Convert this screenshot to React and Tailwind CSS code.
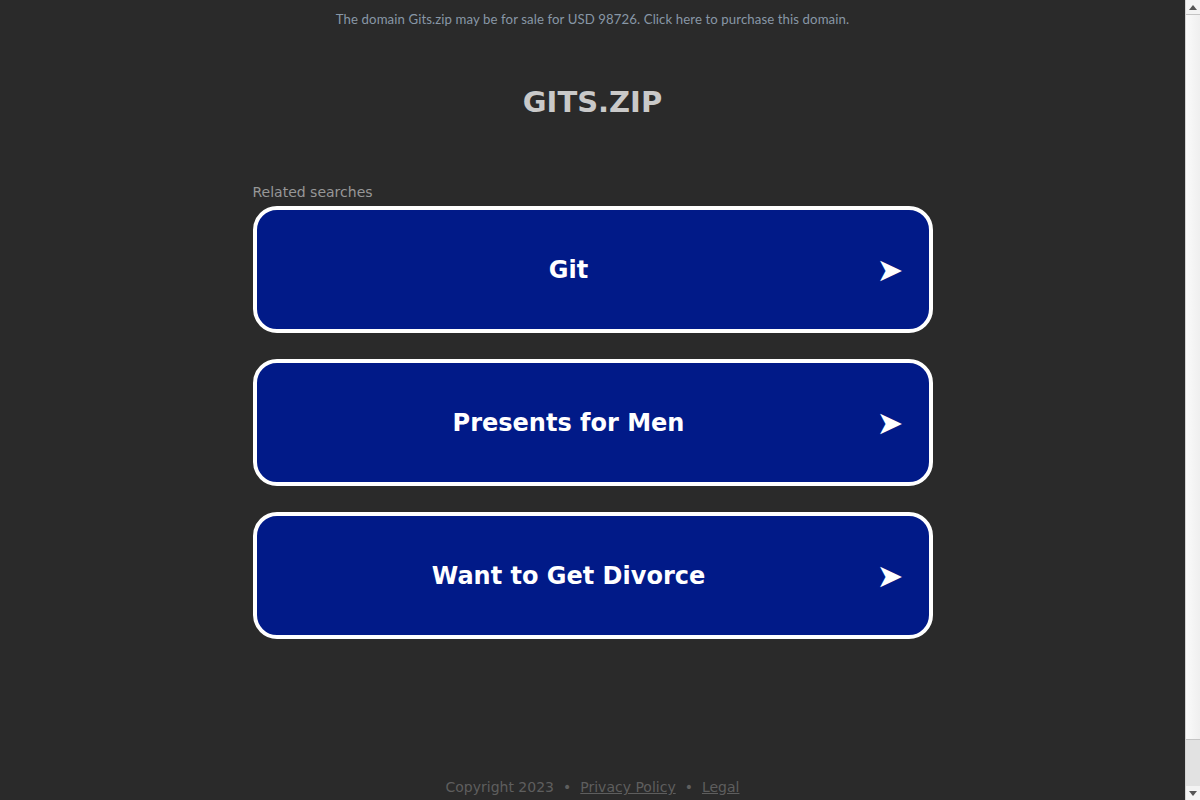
export default function App() {
    const searches = ["Git", "Presents for Men", "Want to Get Divorce"];

    return (
        <div className="h-screen overflow-hidden flex bg-[#2a2a2a]">
            <main className="flex-1 min-h-[847px] flex flex-col items-center font-['DejaVu_Sans',sans-serif]">
                <p className="pt-[11px] text-[13.2px] leading-[16px] text-[#8897a6] font-['Lato',sans-serif] tracking-[0.1px]">
                    The domain Gits.zip may be for sale for USD 98726. Click here to purchase this domain.
                </p>

                <h1 className="mt-[57px] text-[29px] leading-[36px] font-bold text-[#c9c9c9]">
                    GITS.ZIP
                </h1>

                <div className="w-[680px] mt-[63px]">
                    <p className="text-[14px] leading-[18px] text-[#979797]">Related searches</p>
                    <div className="mt-[5px] flex flex-col gap-[26px]">
                        {searches.map((s) => (
                            <div
                                key={s}
                                className="h-[127px] rounded-[24px] border-4 border-white bg-[#011a88] flex items-center cursor-pointer"
                            >
                                <span className="w-[624px] shrink-0 text-center text-[24px] font-bold text-white">{s}</span>
                                <span className="-ml-[4px] text-[32px] leading-[32px] text-white">➤</span>
                            </div>
                        ))}
                    </div>
                </div>

                <footer className="mt-[139px] text-[14px] leading-[18px] text-[#5e5e5e] flex items-center gap-[9px]">
                    <span>Copyright 2023</span>
                    <span>•</span>
                    <a className="underline">Privacy Policy</a>
                    <span>•</span>
                    <a className="underline">Legal</a>
                </footer>
            </main>

            {/* scrollbar */}
            <div className="w-[15px] h-screen shrink-0 flex flex-col bg-[#e2e2e2] border-l border-[#d4d4d4]">
                <div className="h-[14px] bg-[#f3f3f3] flex items-center justify-center">
                    <svg width="8" height="5" viewBox="0 0 8 5"><path d="M4 0L8 5H0z" fill="#555" /></svg>
                </div>
                <div className="h-[726px] bg-gradient-to-r from-[#fafafa] to-[#efefef] border-y border-[#c4c4c4]" />
                <div className="flex-1" />
                <div className="h-[14px] bg-[#f3f3f3] flex items-center justify-center">
                    <svg width="8" height="5" viewBox="0 0 8 5"><path d="M0 0H8L4 5z" fill="#555" /></svg>
                </div>
            </div>
        </div>
    );
}
